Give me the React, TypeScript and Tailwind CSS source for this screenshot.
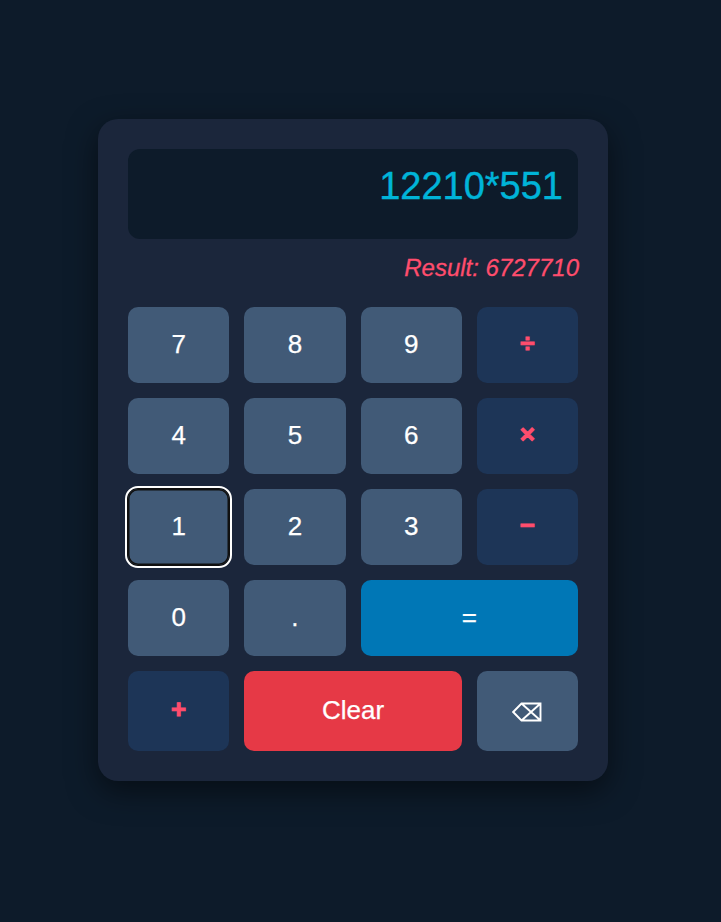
type Kind = "digit" | "operator" | "equals" | "clear";

const kinds: Record<Kind, string> = {
  digit: "bg-[#415a77] text-white pb-[2px] [-webkit-text-stroke:0.25px_currentColor]",
  operator: "bg-[#1d3557] text-[#ff4d6d] font-bold pb-[4px] [-webkit-text-stroke:1px_currentColor]",
  equals: "col-span-2 bg-[#0077b6] text-white pb-[2px] [-webkit-text-stroke:0.25px_currentColor]",
  clear: "col-span-2 bg-[#e63946] text-white pb-[2px] [-webkit-text-stroke:0.25px_currentColor]",
};

const keys: { label: string; kind: Kind; focused?: boolean }[] = [
  { label: "7", kind: "digit" },
  { label: "8", kind: "digit" },
  { label: "9", kind: "digit" },
  { label: "÷", kind: "operator" },
  { label: "4", kind: "digit" },
  { label: "5", kind: "digit" },
  { label: "6", kind: "digit" },
  { label: "×", kind: "operator" },
  { label: "1", kind: "digit", focused: true },
  { label: "2", kind: "digit" },
  { label: "3", kind: "digit" },
  { label: "−", kind: "operator" },
  { label: "0", kind: "digit" },
  { label: ".", kind: "digit" },
  { label: "=", kind: "equals" },
  { label: "+", kind: "operator" },
  { label: "Clear", kind: "clear" },
  { label: "⌫", kind: "digit" },
];

function Backspace() {
  return (
    <svg width="30" height="20" viewBox="0 0 30 20" fill="none" stroke="currentColor" strokeWidth="1.9" className="mt-[3px]" aria-label="Backspace">
      <path d="M9.5 1.5H28.5V18.5H9.5L1.2 10Z M9.5 1.5L28.5 18.5 M28.5 1.5L9.5 18.5" />
    </svg>
  );
}

export default function App() {
  return (
    <div className="flex h-[922px] w-full justify-center bg-[#0d1b2a] pt-[119px] pr-[15px] font-['Liberation_Sans',Arial,sans-serif]">
      <main className="h-[662px] w-[510px] rounded-[20px] bg-[#1b263b] p-[30px] shadow-[0_10px_30px_rgba(0,0,0,0.5)]">
        <div className="h-[90px] rounded-xl bg-[#0d1b2a] py-[15px] pr-[15px] text-right text-[38px] leading-[44px] text-[#00b4d8] [-webkit-text-stroke:0.4px_currentColor]">
          12210*551
        </div>
        <div className="mt-[15px] -mr-px h-[28px] text-right text-2xl leading-[28px] text-[#ff4d6d] italic [-webkit-text-stroke:0.3px_currentColor]">
          Result: 6727710
        </div>
        <div className="mt-[25px] grid grid-cols-4 grid-rows-[repeat(4,76px)_80px] gap-[15px]">
          {keys.map(({ label, kind, focused }) => (
            <button
              key={label}
              className={`flex items-center justify-center rounded-[10px] text-[26px] leading-[30px] ${kinds[kind]} ${
                focused ? "shadow-[inset_0_0_0_1.5px_#101010,0_0_0_1px_#101010] outline-2 outline-offset-1 outline-white" : ""
              }`}
            >
              {label === "⌫" ? <Backspace /> : label}
            </button>
          ))}
        </div>
      </main>
    </div>
  );
}
